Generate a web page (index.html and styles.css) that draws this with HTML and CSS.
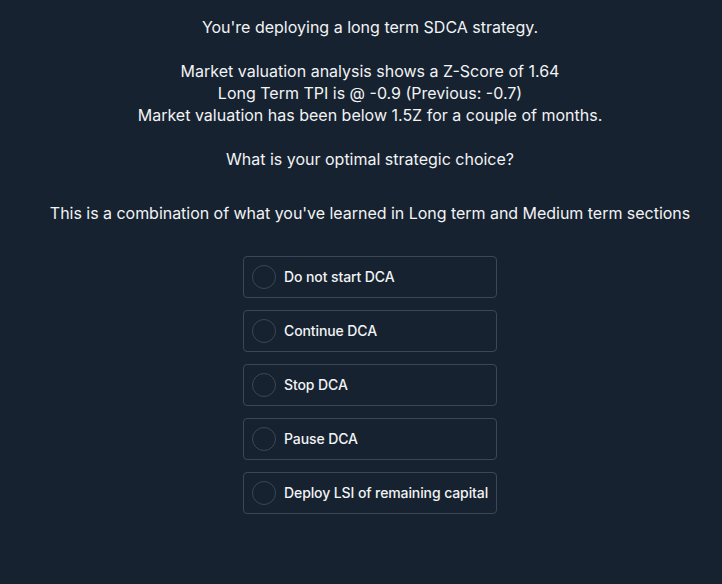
FILE: index.html
```html
<!DOCTYPE html>
<html>
<head>
<meta charset="utf-8">
<link rel="stylesheet" href="styles.css">
</head>
<body>
<main class="quiz">
  <div class="question">
    <p>You're deploying a long term SDCA strategy.</p>
    <p>Market valuation analysis shows a Z-Score of 1.64<br>Long Term TPI is @ -0.9 (Previous: -0.7)<br>Market valuation has been below 1.5Z for a couple of months.</p>
    <p>What is your optimal strategic choice?</p>
  </div>
  <p class="hint">This is a combination of what you've learned in Long term and Medium term sections</p>
  <ul class="options">
    <li class="option"><span class="radio"></span><span class="label">Do not start DCA</span></li>
    <li class="option"><span class="radio"></span><span class="label">Continue DCA</span></li>
    <li class="option"><span class="radio"></span><span class="label">Stop DCA</span></li>
    <li class="option"><span class="radio"></span><span class="label">Pause DCA</span></li>
    <li class="option"><span class="radio"></span><span class="label">Deploy LSI of remaining capital</span></li>
  </ul>
</main>
</body>
</html>
```
FILE: styles.css
```css
html, body {
  margin: 0;
  padding: 0;
  background: #16222f;
}
body {
  font-family: Inter, "Noto Sans", sans-serif;
  color: #f2f3f5;
  height: 584px;
  overflow: hidden;
}
.quiz {
  padding: 16px 0 0 18px;
  display: flex;
  flex-direction: column;
  align-items: center;
  text-align: center;
}
.question p {
  margin: 0 0 22px 0;
  font-size: 16px;
  line-height: 22px;
}
.question p:last-child {
  margin-bottom: 0;
}
.hint {
  margin: 32px 0 0 0;
  font-size: 16px;
  line-height: 22px;
  letter-spacing: -0.03px;
}
.options {
  list-style: none;
  margin: 32px 0 0 0;
  padding: 0;
  display: flex;
  flex-direction: column;
  gap: 12px;
  width: 254px;
}
.option {
  box-sizing: border-box;
  height: 42px;
  border: 1px solid #3b4754;
  border-radius: 4px;
  display: flex;
  align-items: center;
  padding-left: 8px;
  gap: 8px;
}
.radio {
  box-sizing: border-box;
  width: 24px;
  height: 24px;
  border-radius: 50%;
  border: 1px solid #3b4754;
  flex: none;
}
.label {
  font-size: 14px;
  font-weight: 500;
  line-height: 20px;
  letter-spacing: -0.1px;
}
```
